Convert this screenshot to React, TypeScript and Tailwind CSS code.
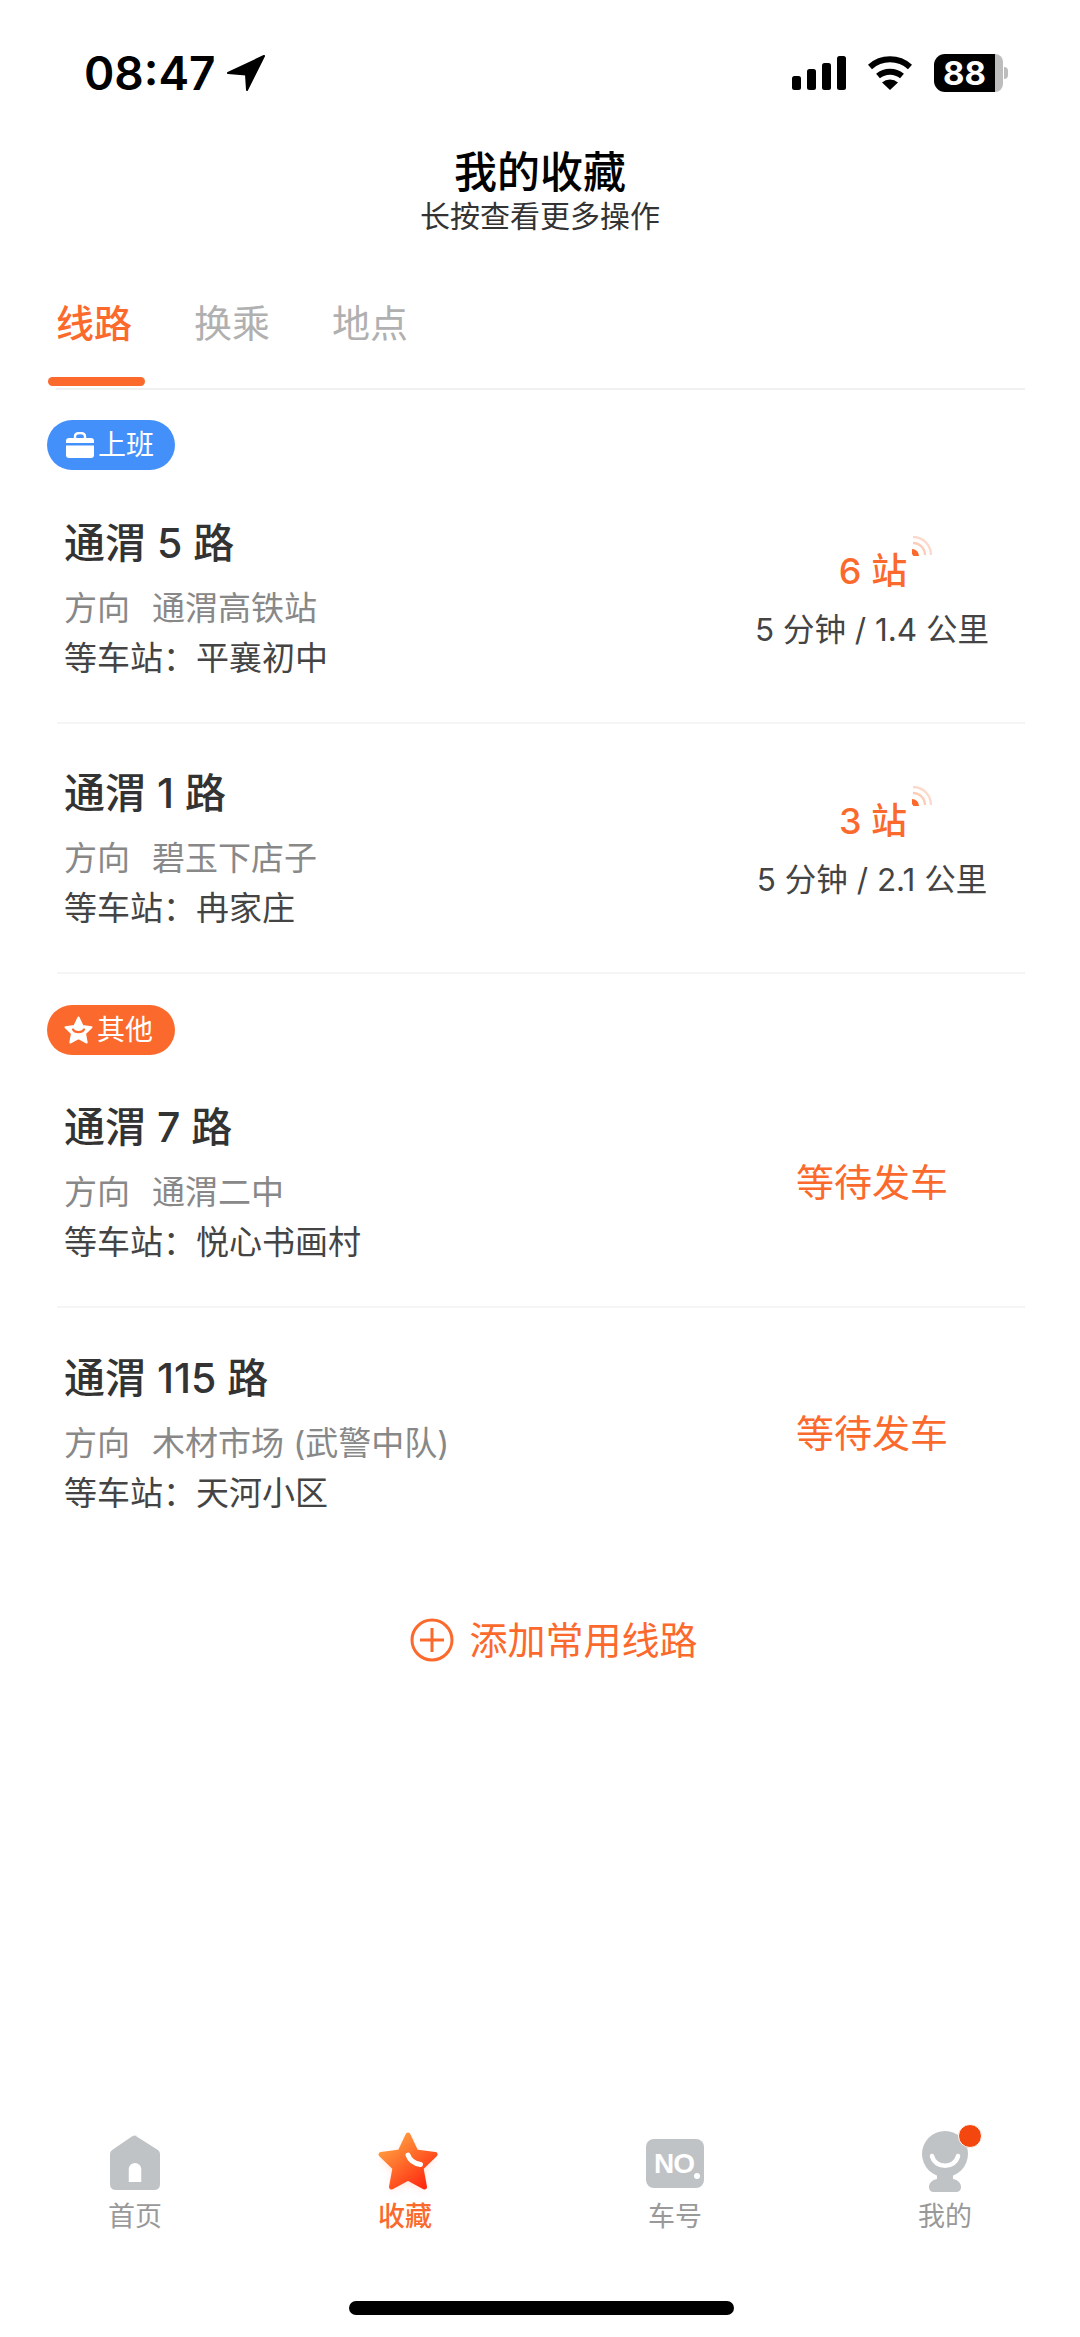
const routes1 = [
  { name: "通渭 5 路", dir: "通渭高铁站", stop: "平襄初中", stops: "6 站", eta: "5 分钟 / 1.4 公里" },
  { name: "通渭 1 路", dir: "碧玉下店子", stop: "冉家庄", stops: "3 站", eta: "5 分钟 / 2.1 公里" },
];

const routes2 = [
  { name: "通渭 7 路", dir: "通渭二中", stop: "悦心书画村" },
  { name: "通渭 115 路", dir: "木材市场 (武警中队)", stop: "天河小区" },
];

type Route = { name: string; dir: string; stop: string; stops?: string; eta?: string };

function SignalMark() {
  return (
    <svg className="absolute left-[73px] top-[-10px]" width="20" height="20" viewBox="0 0 20 20" fill="none">
      <path d="M0 13a7 7 0 0 1 7 7H1.5L0 18z" fill="#fb6a2c" />
      <path d="M1 7a12 12 0 0 1 12 12" stroke="#fbcdb8" strokeWidth="2.4" />
      <path d="M1 1a18 18 0 0 1 18 18" stroke="#fcd9ca" strokeWidth="2.4" />
    </svg>
  );
}

function RouteRow({ route, divider }: { route: Route; divider: boolean }) {
  return (
    <div className={`ml-[57px] mr-[55px] h-[250px] flex items-center pl-[7px] pr-[9px] ${divider ? "border-b-2 border-[#f5f5f5]" : ""}`}>
      <div className="flex-1 pt-[5px]">
        <div className="text-[41px] leading-[48px] font-medium text-[#333333]">{route.name}</div>
        <div className="mt-[16px] text-[33px] leading-[50px] text-[#888888] flex">
          <span>方向</span>
          <span className="ml-[22px]">{route.dir}</span>
        </div>
        <div className="text-[33px] leading-[50px] text-[#444444] flex">
          <span>等车站：</span>
          <span>{route.stop}</span>
        </div>
      </div>
      <div className="w-[288px] flex flex-col items-center">
        {route.stops ? (
          <div className="pt-[4px] flex flex-col items-center">
            <div className="relative ml-[2px] text-[36px] leading-[50px] font-medium text-[#fb6a2c]">
              {route.stops}
              <SignalMark />
            </div>
            <div className="mt-[9px] text-[31.5px] leading-[50px] text-[#444444]">{route.eta}</div>
          </div>
        ) : (
          <div className="text-[38px] leading-[50px] text-[#fb6a2c]">等待发车</div>
        )}
      </div>
    </div>
  );
}

function TabItem({ label, active, children }: { label: string; active?: boolean; children: React.ReactNode }) {
  return (
    <div className="relative flex flex-col items-center">
      <div className="relative h-[62px] w-[100px] flex items-center justify-center">{children}</div>
      <div className={`mt-[7px] text-[27px] leading-[32px] ${active ? "text-[#fb6a2c] font-medium" : "text-[#999999]"}`}>{label}</div>
    </div>
  );
}

export default function App() {
  return (
    <div className="relative w-[1080px] h-[2337px] bg-white overflow-hidden flex flex-col font-[Inter,'Noto_Sans_CJK_SC',sans-serif]">
      {/* status bar */}
      <div className="h-[147px] shrink-0 flex items-start justify-between pt-[44px] pl-[84px] pr-[72px]">
        <div className="flex items-center gap-[11px]">
          <span className="text-[46px] leading-[58px] font-semibold text-black">08:47</span>
          <svg width="38" height="36" viewBox="0 0 38 36">
            <path d="M37 1 L1 18 L19 19.5 L20 35 Z" fill="#000" stroke="#000" strokeWidth="2" strokeLinejoin="round" />
          </svg>
        </div>
        <div className="flex items-center gap-[21px] h-[58px]">
          <svg width="54" height="36" viewBox="0 0 54 36">
            <rect x="0" y="21" width="9" height="14" rx="2.5" />
            <rect x="15" y="14" width="9" height="21" rx="2.5" />
            <rect x="30" y="8" width="9" height="27" rx="2.5" />
            <rect x="45" y="1" width="9" height="34" rx="2.5" />
          </svg>
          <svg width="46" height="36" viewBox="0 0 46 36" fill="none">
            <path d="M3 12a30 30 0 0 1 40 0" stroke="#000" strokeWidth="6" />
            <path d="M11 21a19 19 0 0 1 24 0" stroke="#000" strokeWidth="6" />
            <path d="M15 27.5a12 12 0 0 1 16 0L23 35z" fill="#000" />
          </svg>
          <div className="flex items-center">
            <div className="w-[61px] h-[38px] rounded-l-[11px] bg-black flex items-center justify-center text-white text-[33px] leading-[38px] font-bold">88</div>
            <div className="w-[8px] h-[38px] rounded-r-[8px] bg-[#bdbdbd]" />
            <div className="ml-[1px] w-[4px] h-[12px] rounded-r-full bg-[#bdbdbd]" />
          </div>
        </div>
      </div>

      {/* title */}
      <div className="shrink-0 flex flex-col items-center">
        <div className="text-[43px] leading-[51px] font-medium text-black">我的收藏</div>
        <div className="text-[30px] leading-[36px] text-[#333333]">长按查看更多操作</div>
      </div>

      {/* tabs */}
      <div className="relative mt-[62px] shrink-0 ml-[56px] mr-[55px] h-[94px] border-b-2 border-[#f0f0f0] flex gap-[62px] text-[38px] leading-[54px]">
        <div className="text-[#fb6a2c] font-medium">线路</div>
        <div className="text-[#b0b0b0]">换乘</div>
        <div className="text-[#b0b0b0]">地点</div>
        <div className="absolute left-[-8px] bottom-[2px] w-[97px] h-[9px] rounded-full bg-[#fb6a2c]" />
      </div>

      {/* first group */}
      <div className="shrink-0 mt-[30px] ml-[47px] w-[128px] h-[50px] rounded-full bg-[#4390fb] flex items-center pl-[19px] gap-[4px] text-white text-[28px] leading-[50px]">
        <svg width="28" height="26" viewBox="0 0 28 26" fill="#fff">
          <path d="M9 6V4.5C9 2.500 11 1 14 1s5 1.500 5 3.500V6" fill="none" stroke="#fff" strokeWidth="2.400" />
          <path d="M3 6h22a3 3 0 0 1 3 3v2H0V9a3 3 0 0 1 3-3z" />
          <path d="M0 13.500h28V23a3 3 0 0 1-3 3H3a3 3 0 0 1-3-3z" />
        </svg>
        <span>上班</span>
      </div>
      <div className="shrink-0 mt-[4px]">
        {routes1.map((r) => (
          <RouteRow key={r.name} route={r} divider />
        ))}
      </div>

      {/* second group */}
      <div className="shrink-0 mt-[31px] ml-[47px] w-[128px] h-[50px] rounded-full bg-[#fb6a2c] flex items-center pl-[17px] gap-[4px] text-white text-[28px] leading-[50px]">
        <svg width="29" height="28" viewBox="0 0 29 28">
          <path d="M14.500 1.500l4 8.500 9 1.200-6.500 6.300 1.700 9-8.200-4.400-8.200 4.400 1.700-9L1.500 11.200l9-1.200z" fill="#fff" stroke="#fff" strokeWidth="2" strokeLinejoin="round" />
          <path d="M9 13.500c2 3.500 9 3.500 11 0" fill="none" stroke="#fb6a2c" strokeWidth="2.200" strokeLinecap="round" />
        </svg>
        <span>其他</span>
      </div>
      <div className="shrink-0 mt-[3px]">
        {routes2.map((r, i) => (
          <RouteRow key={r.name} route={r} divider={i === 0} />
        ))}
      </div>

      {/* add route */}
      <div className="shrink-0 mt-[57px] flex items-center justify-center gap-[15px] pl-[28px] text-[38px] leading-[50px] text-[#fb6a2c]">
        <svg width="44" height="44" viewBox="0 0 44 44" fill="none" stroke="#fb6a2c" strokeWidth="3">
          <circle cx="22" cy="22" r="20" />
          <path d="M10 22h24M22 10v24" />
        </svg>
        <span>添加常用线路</span>
      </div>

      {/* tab bar */}
      <div className="mt-auto shrink-0 grid grid-cols-4 pb-[104px]">
        <TabItem label="首页">
          <svg width="50" height="56" viewBox="0 0 48 56" preserveAspectRatio="none">
            <path d="M24 0.500 L46 15 Q48 16.500 48 19 V49 Q48 55 42 55 H6 Q0 55 0 49 V19 Q0 16.500 2 15 L21 1.500 Q24 -0.500 27 1.500 Z" fill="#bfc3c6" />
            <path d="M18 47 V34 a6 6 0 0 1 12 0 V47 Z" fill="#fff" />
          </svg>
        </TabItem>
        <TabItem label="收藏" active>
          <svg width="84" height="80" viewBox="0 0 80 80" className="overflow-visible translate-x-[3px] -translate-y-[2px]">
            <defs>
              <linearGradient id="star" x1="0.150" y1="0.100" x2="0.850" y2="0.950">
                <stop offset="0" stopColor="#ffa040" />
                <stop offset="1" stopColor="#ff2a10" />
              </linearGradient>
              <filter id="glow" x="-30%" y="-30%" width="160%" height="160%">
                <feGaussianBlur stdDeviation="5" />
              </filter>
            </defs>
            <path d="M40 14l8 17 19 2.500-14 13.500 3.500 19L40 57l-16.500 9 3.500-19-14-13.500L32 31z" fill="#ff6a40" opacity="0.250" filter="url(#glow)" transform="translate(0 3)" />
            <path d="M40 14l8 17 19 2.500-14 13.500 3.500 19L40 57l-16.500 9 3.500-19-14-13.500L32 31z" fill="url(#star)" stroke="url(#star)" strokeWidth="5" strokeLinejoin="round" />
            <path d="M40 34c1.500 4.500 6 8.500 12.500 9.500" fill="none" stroke="#fff" strokeWidth="5" strokeLinecap="round" />
          </svg>
        </TabItem>
        <TabItem label="车号">
          <div className="relative w-[58px] h-[49px] rounded-[8px] bg-[#bfc3c6] flex items-center pl-[8px] text-white text-[28px] leading-[49px] font-bold tracking-[-1px] font-['Liberation_Sans',sans-serif]">
            NO
            <span className="absolute right-[4px] bottom-[9px] w-[6px] h-[6px] rounded-full bg-white" />
          </div>
        </TabItem>
        <TabItem label="我的">
          <svg width="48" height="66" viewBox="0 0 48 66">
            <circle cx="24" cy="24" r="23" fill="#bfc3c6" />
            <path d="M11 26c3 13 23 13 26 0" fill="none" stroke="#fff" strokeWidth="4.500" strokeLinecap="round" />
            <path d="M16 45h16v4c5 1 8 4 8 8 0 3-2 5-5 5H13c-3 0-5-2-5-5 0-4 3-7 8-8z" fill="#bfc3c6" />
          </svg>
          <span className="absolute left-[63px] top-[-8px] w-[24px] h-[24px] rounded-full bg-[#f4470f] border border-white" />
        </TabItem>
      </div>

      {/* home indicator */}
      <div className="absolute left-[349px] top-[2301px] w-[385px] h-[14px] rounded-full bg-black" />
    </div>
  );
}
